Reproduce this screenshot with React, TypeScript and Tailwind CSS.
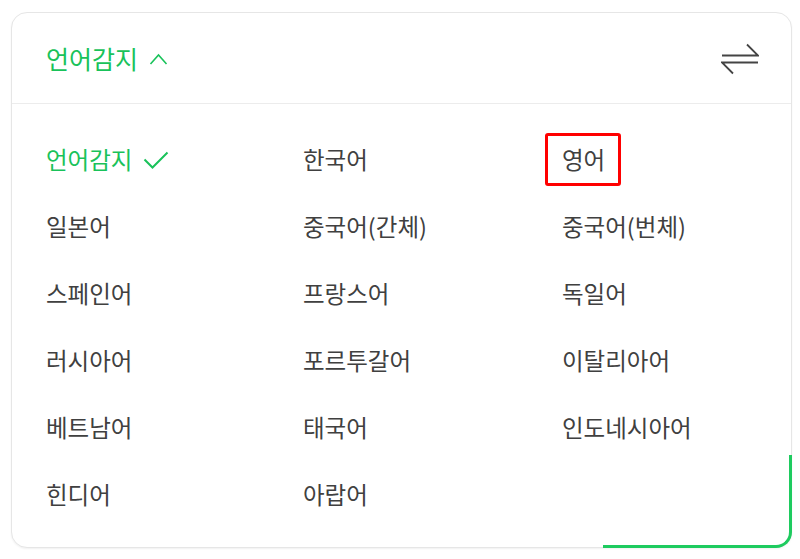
const languages: string[] = [
  "한국어",
  "영어",
  "일본어",
  "중국어(간체)",
  "중국어(번체)",
  "스페인어",
  "프랑스어",
  "독일어",
  "러시아어",
  "포르투갈어",
  "이탈리아어",
  "베트남어",
  "태국어",
  "인도네시아어",
  "힌디어",
  "아랍어",
];

function SwapIcon() {
  return (
    <svg width="38" height="34" viewBox="0 0 38 34" fill="none" stroke="#444" strokeWidth={1.8}>
      <path d="M1 13.5h36L26 2.5" />
      <path d="M37 20.5H1l11 11" />
    </svg>
  );
}

export default function App() {
  return (
    <div className="w-[800px] h-[559px] bg-white pt-3 pl-[11px] font-['Noto_Sans_CJK_KR','Noto_Sans',sans-serif]">
      <div className="relative w-[781px] h-[536px] rounded-2xl border border-[#e6e6e6] bg-white shadow-[0_1px_2px_rgba(0,0,0,0.06)]">
        <div className="flex items-center justify-between h-[91px] pl-[34px] pr-[32px] pt-[1px] border-b border-[#ececec]">
          <div className="flex items-center gap-[11px] text-[25px] text-[#19c25a]">
            <span>언어감지</span>
            <svg width="19" height="13" viewBox="0 0 19 13" fill="none" stroke="currentColor" strokeWidth={1.6}>
              <path d="M1.5 12L9.5 3l8 9" />
            </svg>
          </div>
          <SwapIcon />
        </div>

        <div className="grid grid-cols-[257px_259px_1fr] pl-[34px] pt-[22px]">
          <div className="h-[67px] flex items-center gap-[11px] text-[23.5px] text-[#19c25a]">
            <span>언어감지</span>
            <svg width="26" height="18" viewBox="0 0 26 18" fill="none" stroke="currentColor" strokeWidth={2}>
              <path d="M1.5 8.5l8 8L24.5 1.5" />
            </svg>
          </div>
          {languages.map((lang) => (
            <div key={lang} className="h-[67px] flex items-center text-[23.5px] text-[#404040]">
              {lang === "영어" ? (
                <span className="relative">
                  {lang}
                  <span className="absolute -left-[17px] -right-[16px] -top-[9px] -bottom-[9px] border-[3px] border-[#ff0000] rounded-[3px]" />
                </span>
              ) : (
                <span>{lang}</span>
              )}
            </div>
          ))}
        </div>

        <div className="absolute -right-px -bottom-px w-[189px] h-[93px] border-r-[3px] border-b-[3px] border-[#1ecb5f] rounded-br-2xl" />
      </div>
    </div>
  );
}
